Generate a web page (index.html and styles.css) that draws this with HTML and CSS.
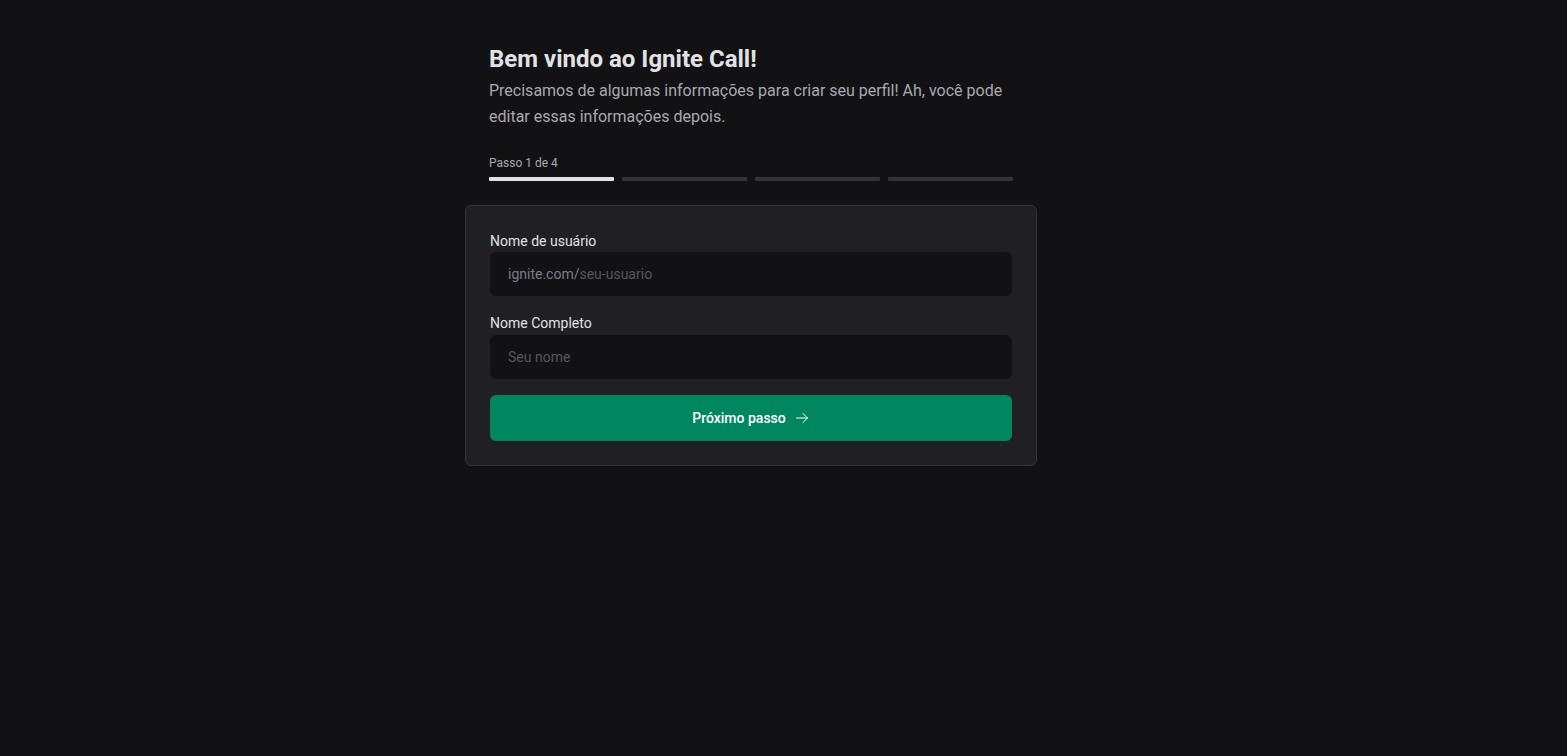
FILE: index.html
```html
<!DOCTYPE html>
<html lang="pt-BR">
<head>
<meta charset="utf-8">
<title>Ignite Call</title>
<link rel="stylesheet" href="styles.css">
</head>
<body>
<div class="page">
<main class="container">
  <header class="header">
    <h1 class="heading">Bem vindo ao Ignite Call!</h1>
    <p class="lead">Precisamos de algumas informações para criar seu perfil! Ah, você pode editar essas informações depois.</p>
    <div class="multistep">
      <span class="step-label">Passo 1 de 4</span>
      <div class="steps">
        <div class="step active"></div>
        <div class="step"></div>
        <div class="step"></div>
        <div class="step"></div>
      </div>
    </div>
  </header>
  <form class="card">
    <label class="field">
      <span class="field-label">Nome de usuário</span>
      <div class="input-box">
        <span class="prefix">ignite.com/</span>
        <input class="input" type="text" placeholder="seu-usuario">
      </div>
    </label>
    <label class="field">
      <span class="field-label">Nome Completo</span>
      <div class="input-box">
        <input class="input" type="text" placeholder="Seu nome">
      </div>
    </label>
    <button class="button" type="button">
      <span>Próximo passo</span>
      <svg class="icon" width="16" height="16" viewBox="0 0 256 256" fill="none" stroke="currentColor" stroke-width="16" stroke-linecap="round" stroke-linejoin="round"><line x1="40" y1="128" x2="216" y2="128"/><polyline points="144 56 216 128 144 200"/></svg>
    </button>
  </form>
</main>
</div>
</body>
</html>
```

FILE: styles.css
```css
* {
  box-sizing: border-box;
}

html, body {
  margin: 0;
  padding: 0;
  background: #121214;
  color: #E1E1E6;
  font-family: Roboto, "Liberation Sans", sans-serif;
  -webkit-font-smoothing: antialiased;
}

.page {
  padding: 40px 65px 16px 0;
}

.container {
  width: 572px;
  margin: 0 auto;
}

.header {
  padding: 0 24px;
}

.heading {
  margin: 0;
  font-size: 24px;
  font-weight: 700;
  line-height: 1.6;
  color: #E1E1E6;
}

.lead {
  margin: 0 0 24px;
  font-size: 16px;
  line-height: 1.6;
  color: #A9A9B2;
}

.multistep {
  display: flex;
  flex-direction: column;
}

.step-label {
  font-size: 12px;
  line-height: 1.6;
  color: #A9A9B2;
}

.steps {
  display: grid;
  grid-template-columns: repeat(4, 1fr);
  gap: 8px;
  margin-top: 4px;
}

.step {
  height: 4px;
  border-radius: 1px;
  background: #323238;
}

.step.active {
  background: #E1E1E6;
}

.card {
  margin-top: 24px;
  background: #202024;
  border: 1px solid #323238;
  border-radius: 6px;
  padding: 24px;
  display: flex;
  flex-direction: column;
  gap: 16px;
}

.field {
  display: flex;
  flex-direction: column;
}

.field-label {
  font-size: 14px;
  line-height: 1.6;
  color: #E1E1E6;
}

.input-box {
  display: flex;
  align-items: center;
  height: 44px;
  padding: 0 16px;
  background: #121214;
  border: 2px solid #121214;
  border-radius: 6px;
}

.prefix {
  font-size: 14px;
  color: #7C7C8A;
}

.input {
  flex: 1;
  min-width: 0;
  border: 0;
  background: transparent;
  outline: none;
  padding: 0;
  font-family: Roboto, "Liberation Sans", sans-serif;
  font-size: 14px;
  color: #E1E1E6;
}

.input::placeholder {
  color: #56565F;
}

.button {
  height: 46px;
  border: 0;
  border-radius: 6px;
  background: #00875F;
  color: #FFFFFF;
  font-family: Roboto, "Liberation Sans", sans-serif;
  font-size: 14px;
  font-weight: 500;
  display: flex;
  align-items: center;
  justify-content: center;
  gap: 8px;
  cursor: pointer;
}

.icon {
  display: block;
}
```
